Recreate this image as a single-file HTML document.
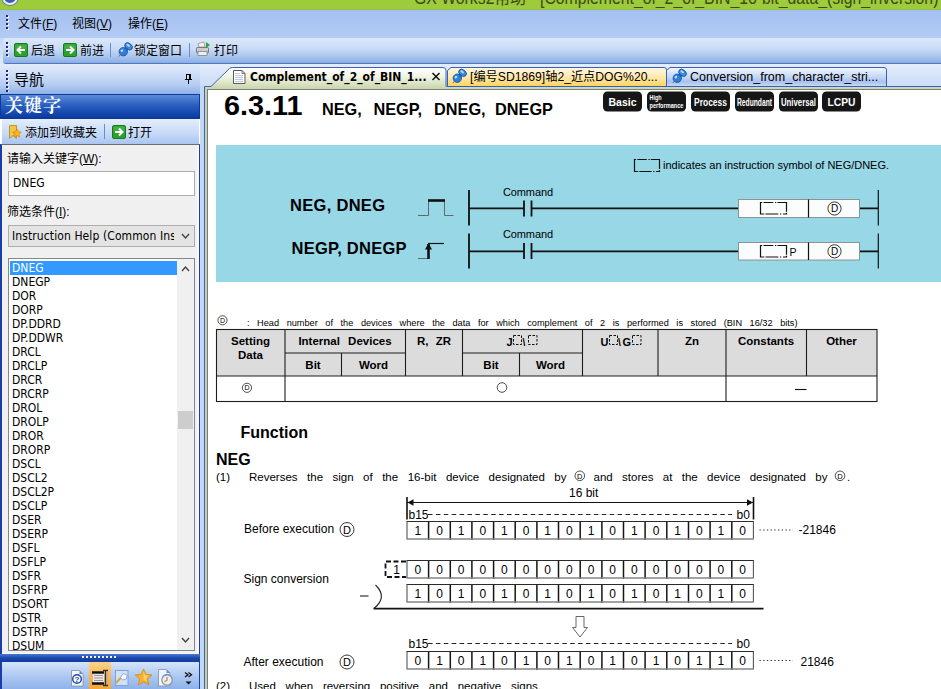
<!DOCTYPE html>
<html><head><meta charset="utf-8">
<style>
*{box-sizing:border-box;margin:0;padding:0}
html,body{width:941px;height:689px;overflow:hidden;background:#fff}
body{position:relative;font-family:"Liberation Sans","Noto Sans CJK SC",sans-serif;font-size:12px;color:#000}
.abs{position:absolute}
.ui{font-family:"Liberation Sans","Noto Sans CJK SC",sans-serif;font-size:12px;white-space:nowrap}
#title{left:0;top:0;width:941px;height:10px;background:#9ccb3b;overflow:hidden;border-bottom:1px solid #93bf46}
#menubar{left:0;top:10px;width:941px;height:28px;background:linear-gradient(#a3c0f0,#b4ccf4)}
#toolbar{left:0;top:38px;width:941px;height:26px;background:linear-gradient(#c4d8f6,#dbe7fa)}
#tbinner{left:3px;top:38px;width:941px;height:26px;border-radius:3px 0 0 3px;background:linear-gradient(#dde9fb 0%,#c6d9f6 45%,#8fb1e6 94%,#4f78c4 98%,#4f78c4 100%)}
.grip{width:3px;background:repeating-linear-gradient(#27257c 0 2px,transparent 2px 4px) 0 0/2px 100% no-repeat,repeating-linear-gradient(transparent 0 1px,#f2f6ff 1px 3px,transparent 3px 4px) 1px 0/2px 100% no-repeat}
#navhdr{left:0;top:64px;width:200px;height:30px;background:linear-gradient(#e1ebfb,#cbdcf7 40%,#b3cbf2 72%,#8fb1e7 100%)}
#kwhdr{left:0;top:94px;width:200px;height:25px;background:linear-gradient(#5a8ad8,#2a5fc0 45%,#0a3aa0);border:1px solid #0a3aa0}
#kwtb{left:2px;top:119px;width:197px;height:25px;background:linear-gradient(#e4eefc,#c5d8f7 60%,#a9c5f0)}
#lpbody{left:0;top:144px;width:200px;height:510px;background:#f0f0f0;border-left:2px solid #1a3ea8;border-right:1px solid #1a3ea8;border-top:1px solid #6e6e6e;box-shadow:inset -2px 0 0 #fafafa,inset 0 -1px 0 #fafafa}
#split{left:0;top:654px;width:200px;height:8px;background:linear-gradient(#4a78d0,#1c48ae 50%,#0f3aa0)}
#iconbar{left:0;top:662px;width:200px;height:27px;border-left:2px solid #1a3ea8;border-right:1px solid #1a3ea8;background:linear-gradient(#d5e4fa,#a8c5f0 60%,#8db2ea)}
#gap{left:200px;top:64px;width:741px;height:24px;background:linear-gradient(#e4edfc,#c9dbf6)}
#gapv{left:200px;top:86px;width:4px;height:603px;background:#c3d8f7}
#frame{left:204px;top:87px;width:737px;height:602px;border-left:1px solid #3b62b8;background:#c5d3a4}
#page{left:207px;top:89px;width:734px;height:600px;background:#fff;border-left:1px solid #7d7d7d;border-top:1px solid #7d7d7d}
.j{text-align:justify;text-align-last:justify;white-space:normal;overflow:hidden;height:14px}
.li{position:absolute;left:10px;height:14px;line-height:14px;font-size:12px;white-space:nowrap;font-family:"DejaVu Sans Condensed","DejaVu Sans","Liberation Sans",sans-serif}
.tah{font-family:"DejaVu Sans Condensed","DejaVu Sans","Liberation Sans","Noto Sans CJK SC",sans-serif}
</style></head><body>
<div id="title" class="abs"></div>
<div id="menubar" class="abs"></div>
<div id="toolbar" class="abs"></div>
<div id="tbinner" class="abs"></div>
<div id="navhdr" class="abs"></div>
<div id="kwhdr" class="abs"></div>
<div id="kwtb" class="abs"></div>
<div id="lpbody" class="abs"></div>
<div id="split" class="abs"></div>
<div id="iconbar" class="abs"></div>
<div id="gap" class="abs"></div>
<div id="gapv" class="abs"></div>
<div id="frame" class="abs"></div>
<div id="page" class="abs"></div>


<div class="abs" style="left:2px;top:-11px;width:16px;height:16px;border-radius:50%;background:#3d5fb0;border:2px solid #e8eef8;box-shadow:0 0 0 1px #6a7890"></div>
<div id="ttext" class="abs" style="left:414px;top:-12px;font-size:18px;line-height:20px;transform:scaleX(.877);transform-origin:0 0;color:#3c4a15;white-space:nowrap;overflow:hidden;height:20px">GX Works2帮助 - [Complement_of_2_of_BIN_16-bit_data_(sign_inversion)</div>
<div class="abs grip" style="left:6px;top:15px;height:16px"></div>
<div class="abs ui" id="m1" style="left:18px;top:16px;line-height:16px">文件(<u>F</u>)</div>
<div class="abs ui" id="m2" style="left:72px;top:16px;line-height:16px">视图(<u>V</u>)</div>
<div class="abs ui" id="m3" style="left:128px;top:16px;line-height:16px">操作(<u>E</u>)</div>
<div class="abs grip" style="left:6px;top:42px;height:16px"></div>
<svg class="abs" style="left:14px;top:43px" width="14" height="14"><rect x=".5" y=".5" width="13" height="13" rx="1.500" fill="#2da12d" stroke="#1a7a1a"/><path d="M1.500 1.500h11v5h-11z" fill="#4cb84c" opacity=".6"/><path d="M11 7H3.500M7 3.500L3.500 7L7 10.500" stroke="#fff" stroke-width="2" fill="none"/></svg>
<div class="abs ui" id="t1" style="margin-top:1px;left:31px;top:42px;line-height:16px">后退</div>
<svg class="abs" style="left:63px;top:43px" width="14" height="14"><rect x=".5" y=".5" width="13" height="13" rx="1.500" fill="#2da12d" stroke="#1a7a1a"/><path d="M1.500 1.500h11v5h-11z" fill="#4cb84c" opacity=".6"/><path d="M3 7H10.500M7 3.500L10.500 7L7 10.500" stroke="#fff" stroke-width="2" fill="none"/></svg>
<div class="abs ui" id="t2" style="margin-top:1px;left:80px;top:42px;line-height:16px">前进</div>
<div class="abs" style="left:110px;top:43px;width:1px;height:14px;background:#6a8ccc"></div>
<svg class="abs" style="left:118px;top:42px" width="16" height="16"><g><path d="M2.300 12.700L.8 14.600" stroke="#7a6a5a" stroke-width="1"/><circle cx="5.300" cy="9.700" r="4.200" fill="#2f80da" stroke="#1a4c9a" stroke-width=".8"/><path d="M6.300 6.200L9 3.800l2.600 2.800L8.800 9z" fill="#1f63bd"/><ellipse cx="10.600" cy="4.300" rx="4.300" ry="3" transform="rotate(40 10.600 4.300)" fill="#3a8ce2" stroke="#1a4c9a" stroke-width=".8"/><ellipse cx="10.200" cy="3.200" rx="2" ry="1" transform="rotate(40 10.200 3.200)" fill="#bfe0ff"/><ellipse cx="3.900" cy="8.600" rx="1.500" ry="1.100" transform="rotate(-40 3.900 8.600)" fill="#bfe0ff"/></g></svg>
<div class="abs ui" id="t3" style="margin-top:1px;left:134px;top:42px;line-height:16px">锁定窗口</div>
<div class="abs" style="left:189px;top:43px;width:1px;height:14px;background:#6a8ccc"></div>
<svg class="abs" style="left:195px;top:41px" width="17" height="17"><path d="M3 2.5L9 1L10 6H4z" fill="#f4f4f4" stroke="#888" stroke-width=".7"/><rect x="1.5" y="6.5" width="12" height="5.5" rx="1" fill="#c8ccd4" stroke="#666" stroke-width=".8"/><rect x="3" y="10.5" width="9" height="4" fill="#eee" stroke="#777" stroke-width=".7"/><path d="M11 1l4 3-4 3z" fill="#2fa32f"/></svg>
<div class="abs ui" id="t4" style="margin-top:1px;left:214px;top:42px;line-height:16px">打印</div>
<!--CHROME-->

<div class="abs grip" style="left:6px;top:70px;height:22px"></div>
<div class="abs ui" id="nav" style="left:14px;top:71px;font-size:15px;line-height:18px">导航</div>
<svg class="abs" style="left:184px;top:73px" width="10" height="12" shape-rendering="crispEdges"><rect x="2" y="1" width="5" height="1"/><rect x="2" y="1" width="1" height="6"/><rect x="5" y="1" width="2" height="6"/><rect x="1" y="6" width="7" height="1"/><rect x="4" y="7" width="1" height="4"/></svg>
<div class="abs" id="kw" style="left:5px;top:95px;font-family:'Liberation Serif','Noto Serif CJK SC',serif;font-weight:bold;font-size:18px;line-height:22px;color:#fff;letter-spacing:1px;white-space:nowrap">关键字</div>
<svg class="abs" style="left:8px;top:124px" width="14" height="16"><path d="M1.5 1.5h7v13l-3.5-3-3.5 3z" fill="#f3c64a" stroke="#b8860b" stroke-width=".8"/><path d="M9 5l1.3 2.8 3 .3-2.3 2 .7 3-2.7-1.6-2.7 1.6.7-3-2.3-2 3-.3z" fill="#ffb21e" stroke="#c77800" stroke-width=".6"/></svg>
<div class="abs ui" id="k1" style="left:25px;top:125px;line-height:16px">添加到收藏夹</div>
<div class="abs" style="left:104px;top:124px;width:1px;height:15px;background:#6a8ccc"></div>
<svg class="abs" style="left:112px;top:125px" width="14" height="14"><rect x=".5" y=".5" width="13" height="13" rx="1.500" fill="#2da12d" stroke="#1a7a1a"/><path d="M1.500 1.500h11v5h-11z" fill="#4cb84c" opacity=".6"/><path d="M3 7H10.500M7 3.500L10.500 7L7 10.500" stroke="#fff" stroke-width="2" fill="none"/></svg>
<div class="abs ui" id="k2" style="left:128px;top:125px;line-height:16px">打开</div>
<div class="abs ui" id="l1" style="left:7px;top:151px;line-height:16px">请输入关键字(<u>W</u>):</div>
<div class="abs" style="left:8px;top:171px;width:187px;height:25px;background:#fff;border:1px solid #abadb3"></div>
<div class="abs ui tah" id="inp" style="left:13px;top:176px;line-height:14px">DNEG</div>
<div class="abs ui" id="l2" style="left:7px;top:204px;line-height:16px">筛选条件(<u>I</u>):</div>
<div class="abs" style="left:8px;top:225px;width:187px;height:22px;background:#e4e4e4;border:1px solid #adadad"></div>
<div class="abs ui tah" id="sel" style="left:12px;top:229px;line-height:14px;width:162px;overflow:hidden;letter-spacing:.1px">Instruction Help (Common Instructions)</div>
<svg class="abs" style="left:181px;top:233px" width="9" height="7"><path d="M1 1l3.5 4L8 1" stroke="#444" stroke-width="1.4" fill="none"/></svg>
<div class="abs" id="lb" style="left:8px;top:258px;width:187px;height:393px;background:#fff;border:1px solid #828790;overflow:hidden">
<div class="li" style="top:2px;left:1px;width:167px;padding-left:2px;background:#3399ff;color:#fff">DNEG</div><div class="li" style="top:16px;left:3px">DNEGP</div><div class="li" style="top:30px;left:3px">DOR</div><div class="li" style="top:44px;left:3px">DORP</div><div class="li" style="top:58px;left:3px">DP.DDRD</div><div class="li" style="top:72px;left:3px">DP.DDWR</div><div class="li" style="top:86px;left:3px">DRCL</div><div class="li" style="top:100px;left:3px">DRCLP</div><div class="li" style="top:114px;left:3px">DRCR</div><div class="li" style="top:128px;left:3px">DRCRP</div><div class="li" style="top:142px;left:3px">DROL</div><div class="li" style="top:156px;left:3px">DROLP</div><div class="li" style="top:170px;left:3px">DROR</div><div class="li" style="top:184px;left:3px">DRORP</div><div class="li" style="top:198px;left:3px">DSCL</div><div class="li" style="top:212px;left:3px">DSCL2</div><div class="li" style="top:226px;left:3px">DSCL2P</div><div class="li" style="top:240px;left:3px">DSCLP</div><div class="li" style="top:254px;left:3px">DSER</div><div class="li" style="top:268px;left:3px">DSERP</div><div class="li" style="top:282px;left:3px">DSFL</div><div class="li" style="top:296px;left:3px">DSFLP</div><div class="li" style="top:310px;left:3px">DSFR</div><div class="li" style="top:324px;left:3px">DSFRP</div><div class="li" style="top:338px;left:3px">DSORT</div><div class="li" style="top:352px;left:3px">DSTR</div><div class="li" style="top:366px;left:3px">DSTRP</div><div class="li" style="top:380px;left:3px">DSUM</div>
<div class="abs" style="left:168px;top:0;width:17px;height:391px;background:#f0f0f0"></div>
<div class="abs" style="left:169px;top:152px;width:15px;height:18px;background:#cdcdcd"></div>
<svg class="abs" style="left:172px;top:6px" width="9" height="7"><path d="M1 6l3.5-4L8 6" stroke="#444" stroke-width="1.4" fill="none"/></svg>
<svg class="abs" style="left:172px;top:378px" width="9" height="7"><path d="M1 1l3.5 4L8 1" stroke="#444" stroke-width="1.4" fill="none"/></svg>
</div>
<div class="abs" style="left:82px;top:656px;width:36px;height:2px;background-image:repeating-linear-gradient(90deg,#eef3fd 0 2px,transparent 2px 4px)"></div>

<div class="abs" style="left:89px;top:662px;width:22px;height:27px;background:linear-gradient(#fdd28a,#f9b95a 45%,#f4a637)"></div>
<svg class="abs" style="left:60px;top:662px" width="140" height="27">
<g transform="translate(11,8)"><path d="M.5.500h8l3.500 3.500V16H.5z" fill="#f6f9fe" stroke="#8b95a8" stroke-width=".9"/><path d="M8.500.5l3.500 3.500H8.500z" fill="#5d8fd8"/><circle cx="6" cy="9" r="4.300" fill="#fff" stroke="#1b45a8" stroke-width="1.400"/><text x="6" y="12" font-size="8" font-weight="bold" fill="#1b45a8" text-anchor="middle" font-family="Liberation Sans, sans-serif">?</text></g>
<g transform="translate(32,8)"><rect x="1" y="3" width="11" height="10" fill="#e9e9e9"/><path d="M0 2.500H12M0 13.500H12" stroke="#111" stroke-width="2.400"/><path d="M2 5.500h9M2 8h9M2 10.500h9" stroke="#9a9a9a" stroke-width="1.200"/><path d="M11 .5h5M11 15.500h5M13.500 .5V15.500" stroke="#333" stroke-width="1.300"/><path d="M15.200 2V14" stroke="#9fb4d8" stroke-width="1"/></g>
<g transform="translate(55,8)"><rect x=".5" y=".5" width="12.500" height="15" fill="#cfe0fa" stroke="#7e9bd0" stroke-width=".9"/><path d="M1 13L6 7.500" stroke="#d9a23a" stroke-width="2"/><path d="M5.500 7.500l2.500-4 4 1.500-.5 4-4 1z" fill="#f4f8ff" stroke="#8aa0c8" stroke-width=".8"/></g>
<path d="M83.600 7l2.500 5.400 5.900.6-4.400 4 1.300 5.800-5.300-3-5.300 3 1.300-5.800-4.400-4 5.900-.6z" fill="#f6b02c" stroke="#d8860f" stroke-width=".8"/>
<path d="M83.600 9.500l1.600 3.700 3.600.4-2.700 2.500.8 3.600-3.300-1.900z" fill="#fbd26a"/>
<g transform="translate(98,7)"><path d="M.5.500h8l3.500 3.500V17H.5z" fill="#f2f5fb" stroke="#8b95a8" stroke-width=".9"/><path d="M8.500.5l3.500 3.500H8.500z" fill="#5d8fd8"/><circle cx="9" cy="11" r="5.200" fill="#e8eef8" stroke="#8c97ad" stroke-width="1.300"/><path d="M9 8v3.200l-2.500 1.500" stroke="#d88a1a" stroke-width="1.300" fill="none"/><path d="M5 7.500a5 5 0 0 1 7-1" stroke="#5d8fd8" stroke-width="1.200" fill="none"/></g>
<path d="M125 10.500l3 2.300-3 2.300M128.500 10.500l3 2.300-3 2.300" fill="none" stroke="#111" stroke-width="1.300"/>
<path d="M125.500 19.500h6l-3 3z" fill="#111"/>
</svg>
<!--LEFT-->

<svg class="abs" style="left:200px;top:64px" width="741" height="26">
<defs><linearGradient id="tg" x1="0" y1="0" x2="0" y2="1"><stop offset="0" stop-color="#ffffff"/><stop offset=".4" stop-color="#f1f4e6"/><stop offset="1" stop-color="#c5d3a4"/></linearGradient>
<linearGradient id="tg2" x1="0" y1="0" x2="0" y2="1"><stop offset="0" stop-color="#fff8e6"/><stop offset=".5" stop-color="#ffe9ae"/><stop offset="1" stop-color="#ffd15f"/></linearGradient>
<linearGradient id="tg3" x1="0" y1="0" x2="0" y2="1"><stop offset="0" stop-color="#f4f8fe"/><stop offset=".5" stop-color="#c4d7f6"/><stop offset=".75" stop-color="#a8c2ee"/><stop offset="1" stop-color="#c9dbf7"/></linearGradient></defs>
<path d="M247.500 22.500V6.500L251 3.500H464q2.500 0 2.500 2.500V22.500z" fill="url(#tg2)" stroke="#3560bd"/>
<path d="M466.500 22.500V6.500L470 3.500H684q2.500 0 2.500 2.500V22.500z" fill="url(#tg3)" stroke="#3560bd"/>
<path d="M4.500 26V22.500H11L29.500 4.500q1.500-1 3-1H243.500q3 0 3 3V22.500H741V26z" fill="url(#tg)" stroke="none"/>
<path d="M4.500 26V22.500H11L29.500 4.500q1.500-1 3-1H243q3 0 3 3V22.500" fill="none" stroke="#3b62b8"/>
<path d="M246.500 22.500H741" stroke="#3560bd"/>
<path d="M7 25.500H741" stroke="#7d7d7d"/>
<g transform="translate(33,6)"><path d="M.5.500h8.500l3 3V13.500H.5z" fill="#fff" stroke="#5a5a5a"/><path d="M9 .5v3h3" fill="none" stroke="#5a5a5a" stroke-width=".8"/><path d="M2 5.500h8M2 7.500h8M2 9.500h8M2 11.500h8M2 3.500h5" stroke="#a9b8d8" stroke-width=".8"/></g>
<g transform="translate(252,4.500)"><path d="M2.300 12.700L.8 14.600" stroke="#7a6a5a" stroke-width="1"/><circle cx="5.300" cy="9.700" r="4.200" fill="#2f80da" stroke="#1a4c9a" stroke-width=".8"/><path d="M6.300 6.200L9 3.800l2.600 2.800L8.800 9z" fill="#1f63bd"/><ellipse cx="10.600" cy="4.300" rx="4.300" ry="3" transform="rotate(40 10.600 4.300)" fill="#3a8ce2" stroke="#1a4c9a" stroke-width=".8"/><ellipse cx="10.200" cy="3.200" rx="2" ry="1" transform="rotate(40 10.200 3.200)" fill="#bfe0ff"/><ellipse cx="3.900" cy="8.600" rx="1.500" ry="1.100" transform="rotate(-40 3.900 8.600)" fill="#bfe0ff"/></g>
<g transform="translate(472,4.500)"><path d="M2.300 12.700L.8 14.600" stroke="#7a6a5a" stroke-width="1"/><circle cx="5.300" cy="9.700" r="4.200" fill="#2f80da" stroke="#1a4c9a" stroke-width=".8"/><path d="M6.300 6.200L9 3.800l2.600 2.800L8.800 9z" fill="#1f63bd"/><ellipse cx="10.600" cy="4.300" rx="4.300" ry="3" transform="rotate(40 10.600 4.300)" fill="#3a8ce2" stroke="#1a4c9a" stroke-width=".8"/><ellipse cx="10.200" cy="3.200" rx="2" ry="1" transform="rotate(40 10.200 3.200)" fill="#bfe0ff"/><ellipse cx="3.900" cy="8.600" rx="1.500" ry="1.100" transform="rotate(-40 3.900 8.600)" fill="#bfe0ff"/></g>
<path d="M232.500 9l7 7M239.500 9l-7 7" stroke="#111" stroke-width="1.500"/>
</svg>
<div class="abs ui" id="tab1" style="left:250px;top:69px;line-height:16px;font-weight:bold;font-size:12px;font-family:'DejaVu Sans Condensed','Liberation Sans',sans-serif">Complement_of_2_of_BIN_1...</div>
<div class="abs ui" id="tab2" style="left:470px;top:69px;line-height:16px;font-size:12.2px">[编号SD1869]轴2_近点DOG%20...</div>
<div class="abs ui" id="tab3" style="left:690px;top:69px;line-height:16px;font-size:12.5px">Conversion_from_character_stri...</div>
<!--TABS-->

<svg class="abs" style="left:0;top:0" width="941" height="689" font-family="Liberation Sans, sans-serif" fill="#000">
<text x="224" y="115" font-size="27.500" font-weight="bold" textLength="78.500" lengthAdjust="spacingAndGlyphs">6.3.11</text>
<g font-size="16.300" font-weight="bold"><text x="322" y="115">NEG,</text><text x="373.500" y="115">NEGP,</text><text x="434" y="115">DNEG,</text><text x="495" y="115">DNEGP</text></g>
<rect x="603" y="91.500" width="39" height="20" rx="4.500" fill="#161616"/><text x="622.5" y="106" font-size="11" font-weight="bold" fill="#fff" text-anchor="middle" textLength="28" lengthAdjust="spacingAndGlyphs">Basic</text><rect x="647" y="91.500" width="39" height="20" rx="4.500" fill="#161616"/><text x="649.5" y="100" font-size="7.500" font-weight="bold" fill="#fff" textLength="12" lengthAdjust="spacingAndGlyphs">High</text><text x="649.5" y="108" font-size="7.500" font-weight="bold" fill="#fff" textLength="34" lengthAdjust="spacingAndGlyphs">performance</text><rect x="691" y="91.500" width="39" height="20" rx="4.500" fill="#161616"/><text x="710.5" y="106" font-size="10.5" font-weight="bold" fill="#fff" text-anchor="middle" textLength="33" lengthAdjust="spacingAndGlyphs">Process</text><rect x="735" y="91.500" width="39" height="20" rx="4.500" fill="#161616"/><text x="754.5" y="106" font-size="10" font-weight="bold" fill="#fff" text-anchor="middle" textLength="35" lengthAdjust="spacingAndGlyphs">Redundant</text><rect x="779" y="91.500" width="39" height="20" rx="4.500" fill="#161616"/><text x="798.5" y="106" font-size="10" font-weight="bold" fill="#fff" text-anchor="middle" textLength="35" lengthAdjust="spacingAndGlyphs">Universal</text><rect x="822" y="91.500" width="39" height="20" rx="4.500" fill="#161616"/><text x="841.5" y="106" font-size="11.5" font-weight="bold" fill="#fff" text-anchor="middle" textLength="28" lengthAdjust="spacingAndGlyphs">LCPU</text>
<rect x="216" y="145" width="725" height="137" fill="#97d7e6"/>
<path d="M634.5 159.5H636.1M637.4 159.5H646.8M648.4 159.5H649.7M650.8 159.5H659.5M634.5 171.5H638.2M639.3 171.5H651.6M653.2 171.5H654.5M656.1 171.5H659.5M634.5 159.0V172.0M659.5 159.0V169.1M659.5 170.3V172.0" fill="none" stroke="#111" stroke-width="1.200"/>
<text x="663" y="168.500" font-size="11" textLength="226" lengthAdjust="spacing">indicates an instruction symbol of NEG/DNEG.</text>
<g font-size="16.500" font-weight="bold"><text x="290" y="211" textLength="95" lengthAdjust="spacing">NEG, DNEG</text><text x="291.500" y="253.500" textLength="115" lengthAdjust="spacing">NEGP, DNEGP</text></g>
<path d="M418 215.500H428.500V200.500M444.500 200.500V215.500H453.500" fill="none" stroke="#5d6b70" stroke-width="1"/>
<path d="M428 200.500H445" stroke="#111" stroke-width="2.600"/>
<path d="M418 258.500H428" stroke="#5d6b70" stroke-width="1"/>
<path d="M428.500 259V244" stroke="#111" stroke-width="2.600"/><path d="M428 243.500H444" stroke="#111" stroke-width="1.200"/>
<path d="M425 249.500L428.500 243L432 249.500z" fill="#111"/>
<g stroke="#111" stroke-width="1.800" fill="none">
<path d="M469 190V225.500M469 233.500V268.500"/>
<path d="M469 208.300H524M531.500 208.300H738M860 208.300H878"/>
<path d="M469 251.300H524M531.500 251.300H738M860 251.300H878"/>
<path d="M524 200.500V216.500M531.500 200.500V216.500M524 243V259M531.500 243V259"/>
</g>
<path d="M878.300 190V225.500M878.300 233.500V268.500" stroke="#111" stroke-width="1.200"/>
<text x="503" y="195.500" font-size="11" textLength="50" lengthAdjust="spacing">Command</text>
<text x="503" y="237.500" font-size="11" textLength="50" lengthAdjust="spacing">Command</text>
<rect x="738.500" y="199.500" width="121" height="18" fill="#fbfdfd" stroke="#8a9396"/>
<rect x="738.500" y="242.500" width="121" height="17.500" fill="#fbfdfd" stroke="#8a9396"/>
<path d="M808.500 199.500V217.500M808.500 242.500V260" stroke="#111" stroke-width="1.200"/>
<path d="M760.5 202.5H762.2M763.5 202.5H773.3M775.0 202.5H776.3M777.5 202.5H786.5M760.5 214.0H764.3M765.5 214.0H778.3M780.0 214.0H781.3M783.0 214.0H786.5M760.5 202.0V214.5M786.5 202.0V211.7M786.5 212.8V214.5" fill="none" stroke="#111" stroke-width="1.200"/>
<path d="M760.5 245.5H762.2M763.5 245.5H773.3M775.0 245.5H776.3M777.5 245.5H786.5M760.5 257.0H764.3M765.5 257.0H778.3M780.0 257.0H781.3M783.0 257.0H786.5M760.5 245.0V257.5M786.5 245.0V254.7M786.5 255.8V257.5" fill="none" stroke="#111" stroke-width="1.200"/>
<text x="789.500" y="256" font-size="10.500">P</text>
<circle cx="834.5" cy="208.5" r="6.6" fill="none" stroke="#222" stroke-width=".9"/><text x="834.5" y="212.1" font-size="10" text-anchor="middle">D</text>
<circle cx="834.5" cy="251.3" r="6.6" fill="none" stroke="#222" stroke-width=".9"/><text x="834.5" y="254.9" font-size="10" text-anchor="middle">D</text>

<circle cx="222.5" cy="320.3" r="4.6" fill="none" stroke="#222" stroke-width="0.8"/><text x="222.5" y="322.8" font-size="7" text-anchor="middle">D</text>
<g fill="#dcdcdc"><rect x="216.500" y="329.500" width="660.500" height="46.500"/></g>
<g stroke="#1e1e1e" stroke-width="1.100" fill="none">
<rect x="216.500" y="329.500" width="660.500" height="72"/>
<path d="M216.500 376H877M285 353H405.500M462.500 353H582.500"/>
<path d="M285 329.500V401.500M341.500 353V376M405.500 329.500V376M462.500 329.500V376M519.500 353V376M582.500 329.500V376M658 329.500V376M726 329.500V401.500M806.500 329.500V376"/>
</g>
<g font-size="11.500" font-weight="bold" text-anchor="middle">
<text x="250.500" y="345">Setting</text><text x="250.500" y="359">Data</text>
<text x="345" y="345" word-spacing="5">Internal Devices</text>
<text x="313" y="369">Bit</text><text x="373.500" y="369">Word</text>
<text x="434" y="345" word-spacing="4">R, ZR</text>
<text x="491" y="369">Bit</text><text x="550.500" y="369">Word</text>
<text x="692" y="345">Zn</text><text x="766" y="345">Constants</text><text x="841.500" y="345">Other</text>
</g>
<g font-size="11" font-weight="bold"><text x="506.500" y="345.500">J</text><text x="522.500" y="345.500" font-size="10">\</text><text x="600.500" y="345.500">U</text><text x="618" y="345.500" font-size="10">\</text><text x="622.500" y="345.500">G</text></g>
<g fill="none" stroke="#111" stroke-width="1" stroke-dasharray="2.500 1.500"><rect x="513.500" y="335.500" width="8" height="9"/><rect x="528.500" y="335.500" width="8.500" height="9"/><rect x="609.500" y="335.500" width="8" height="9"/><rect x="632.500" y="335.500" width="8.500" height="9"/></g>
<circle cx="247" cy="387.8" r="4.6" fill="none" stroke="#222" stroke-width="0.8"/><text x="247" y="390.3" font-size="7" text-anchor="middle">D</text>
<circle cx="502" cy="387.500" r="4.800" fill="none" stroke="#333" stroke-width=".9"/>
<path d="M795 389.500H806.500" stroke="#111" stroke-width="1.100"/>
<text x="240.500" y="437.500" font-size="16" font-weight="bold">Function</text>
<text x="216" y="465" font-size="16" font-weight="bold">NEG</text>
<circle cx="579.8" cy="475.8" r="4.8" fill="none" stroke="#222" stroke-width="0.8"/><text x="579.8" y="478.5" font-size="7.5" text-anchor="middle">D</text>
<circle cx="840" cy="475.8" r="4.8" fill="none" stroke="#222" stroke-width="0.8"/><text x="840" y="478.5" font-size="7.5" text-anchor="middle">D</text>
<text x="569" y="497" font-size="12">16 bit</text>
<path d="M407 502.500H753.500" stroke="#111" stroke-width="1.100"/>
<path d="M407 497V519.500M753.500 497V519.500" stroke="#111" stroke-width="1.600"/>
<path d="M407.500 502.500l6-3.200v6.400zM753 502.500l-6-3.200v6.400z" fill="#111"/>
<text x="408.500" y="518.500" font-size="12">b15</text><text x="736.500" y="518.500" font-size="12">b0</text>
<path d="M428 514.500H732" stroke="#222" stroke-width="1" stroke-dasharray="4.500 3.400"/>
<rect x="407.0" y="521.5" width="346.4" height="17.5" fill="#fff"/><path d="M428.6 521.5V540M450.3 521.5V540M471.9 521.5V540M493.6 521.5V540M515.2 521.5V540M536.9 521.5V540M558.5 521.5V540M580.2 521.5V540M601.9 521.5V540M623.5 521.5V540M645.1 521.5V540M666.8 521.5V540M688.5 521.5V540M710.1 521.5V540M731.8 521.5V540" stroke="#151515" stroke-width="1.500"/><path d="M406.5 521.5H753.9" stroke="#2a2a2a" stroke-width="1.200"/><path d="M407.0 521.5V539M753.4 521.5V539" stroke="#555" stroke-width="1.100"/><path d="M406.5 539H753.9" stroke="#858585" stroke-width="1.500"/><text x="417.8" y="534.7" font-size="12" text-anchor="middle">1</text><text x="439.5" y="534.7" font-size="12" text-anchor="middle">0</text><text x="461.1" y="534.7" font-size="12" text-anchor="middle">1</text><text x="482.8" y="534.7" font-size="12" text-anchor="middle">0</text><text x="504.4" y="534.7" font-size="12" text-anchor="middle">1</text><text x="526.1" y="534.7" font-size="12" text-anchor="middle">0</text><text x="547.7" y="534.7" font-size="12" text-anchor="middle">1</text><text x="569.4" y="534.7" font-size="12" text-anchor="middle">0</text><text x="591.0" y="534.7" font-size="12" text-anchor="middle">1</text><text x="612.7" y="534.7" font-size="12" text-anchor="middle">0</text><text x="634.3" y="534.7" font-size="12" text-anchor="middle">1</text><text x="656.0" y="534.7" font-size="12" text-anchor="middle">0</text><text x="677.6" y="534.7" font-size="12" text-anchor="middle">1</text><text x="699.3" y="534.7" font-size="12" text-anchor="middle">0</text><text x="720.9" y="534.7" font-size="12" text-anchor="middle">1</text><text x="742.6" y="534.7" font-size="12" text-anchor="middle">0</text>
<text x="244" y="533" font-size="12">Before execution</text>
<circle cx="347" cy="529.5" r="7" fill="none" stroke="#222" stroke-width="0.9"/><text x="347" y="533.5" font-size="11" text-anchor="middle">D</text>
<path d="M759.500 530H793" stroke="#2a2a2a" stroke-width="1.200" stroke-dasharray="1.300 2.400"/>
<text x="798.500" y="533.500" font-size="12">-21846</text>
<path d="M406 561.500H385.500V577H406" fill="none" stroke="#111" stroke-width="1.800" stroke-dasharray="5 2.500"/>
<text x="396.500" y="574" font-size="12" text-anchor="middle">1</text>
<rect x="407.0" y="560.5" width="346.4" height="17.5" fill="#fff"/><path d="M428.6 560.5V579M450.3 560.5V579M471.9 560.5V579M493.6 560.5V579M515.2 560.5V579M536.9 560.5V579M558.5 560.5V579M580.2 560.5V579M601.9 560.5V579M623.5 560.5V579M645.1 560.5V579M666.8 560.5V579M688.5 560.5V579M710.1 560.5V579M731.8 560.5V579" stroke="#151515" stroke-width="1.500"/><path d="M406.5 560.5H753.9" stroke="#2a2a2a" stroke-width="1.200"/><path d="M407.0 560.5V578M753.4 560.5V578" stroke="#555" stroke-width="1.100"/><path d="M406.5 578H753.9" stroke="#858585" stroke-width="1.500"/><text x="417.8" y="573.7" font-size="12" text-anchor="middle">0</text><text x="439.5" y="573.7" font-size="12" text-anchor="middle">0</text><text x="461.1" y="573.7" font-size="12" text-anchor="middle">0</text><text x="482.8" y="573.7" font-size="12" text-anchor="middle">0</text><text x="504.4" y="573.7" font-size="12" text-anchor="middle">0</text><text x="526.1" y="573.7" font-size="12" text-anchor="middle">0</text><text x="547.7" y="573.7" font-size="12" text-anchor="middle">0</text><text x="569.4" y="573.7" font-size="12" text-anchor="middle">0</text><text x="591.0" y="573.7" font-size="12" text-anchor="middle">0</text><text x="612.7" y="573.7" font-size="12" text-anchor="middle">0</text><text x="634.3" y="573.7" font-size="12" text-anchor="middle">0</text><text x="656.0" y="573.7" font-size="12" text-anchor="middle">0</text><text x="677.6" y="573.7" font-size="12" text-anchor="middle">0</text><text x="699.3" y="573.7" font-size="12" text-anchor="middle">0</text><text x="720.9" y="573.7" font-size="12" text-anchor="middle">0</text><text x="742.6" y="573.7" font-size="12" text-anchor="middle">0</text>
<rect x="407.0" y="584.5" width="346.4" height="17.5" fill="#fff"/><path d="M428.6 584.5V603M450.3 584.5V603M471.9 584.5V603M493.6 584.5V603M515.2 584.5V603M536.9 584.5V603M558.5 584.5V603M580.2 584.5V603M601.9 584.5V603M623.5 584.5V603M645.1 584.5V603M666.8 584.5V603M688.5 584.5V603M710.1 584.5V603M731.8 584.5V603" stroke="#151515" stroke-width="1.500"/><path d="M406.5 584.5H753.9" stroke="#2a2a2a" stroke-width="1.200"/><path d="M407.0 584.5V602M753.4 584.5V602" stroke="#555" stroke-width="1.100"/><path d="M406.5 602H753.9" stroke="#858585" stroke-width="1.500"/><text x="417.8" y="597.7" font-size="12" text-anchor="middle">1</text><text x="439.5" y="597.7" font-size="12" text-anchor="middle">0</text><text x="461.1" y="597.7" font-size="12" text-anchor="middle">1</text><text x="482.8" y="597.7" font-size="12" text-anchor="middle">0</text><text x="504.4" y="597.7" font-size="12" text-anchor="middle">1</text><text x="526.1" y="597.7" font-size="12" text-anchor="middle">0</text><text x="547.7" y="597.7" font-size="12" text-anchor="middle">1</text><text x="569.4" y="597.7" font-size="12" text-anchor="middle">0</text><text x="591.0" y="597.7" font-size="12" text-anchor="middle">1</text><text x="612.7" y="597.7" font-size="12" text-anchor="middle">0</text><text x="634.3" y="597.7" font-size="12" text-anchor="middle">1</text><text x="656.0" y="597.7" font-size="12" text-anchor="middle">0</text><text x="677.6" y="597.7" font-size="12" text-anchor="middle">1</text><text x="699.3" y="597.7" font-size="12" text-anchor="middle">0</text><text x="720.9" y="597.7" font-size="12" text-anchor="middle">1</text><text x="742.6" y="597.7" font-size="12" text-anchor="middle">0</text>
<text x="243.500" y="582.500" font-size="12">Sign conversion</text>
<path d="M360 596H368.500" stroke="#222" stroke-width="1.100"/>
<path d="M375.500 585Q388 597 374 608.500" fill="none" stroke="#222" stroke-width="1.100"/>
<path d="M373.500 608.700H763.500" stroke="#111" stroke-width="1.700"/>
<path d="M576 616.500H584V627.500H587.500L580 637L572.500 627.500H576z" fill="#fff" stroke="#555" stroke-width=".9"/>
<text x="408.500" y="647.500" font-size="12">b15</text><text x="736.500" y="647.500" font-size="12">b0</text>
<path d="M428 643.500H732" stroke="#222" stroke-width="1" stroke-dasharray="4.500 3.400"/>
<rect x="407.0" y="651.5" width="346.4" height="17.5" fill="#fff"/><path d="M428.6 651.5V670M450.3 651.5V670M471.9 651.5V670M493.6 651.5V670M515.2 651.5V670M536.9 651.5V670M558.5 651.5V670M580.2 651.5V670M601.9 651.5V670M623.5 651.5V670M645.1 651.5V670M666.8 651.5V670M688.5 651.5V670M710.1 651.5V670M731.8 651.5V670" stroke="#151515" stroke-width="1.500"/><path d="M406.5 651.5H753.9" stroke="#2a2a2a" stroke-width="1.200"/><path d="M407.0 651.5V669M753.4 651.5V669" stroke="#555" stroke-width="1.100"/><path d="M406.5 669H753.9" stroke="#858585" stroke-width="1.500"/><text x="417.8" y="664.7" font-size="12" text-anchor="middle">0</text><text x="439.5" y="664.7" font-size="12" text-anchor="middle">1</text><text x="461.1" y="664.7" font-size="12" text-anchor="middle">0</text><text x="482.8" y="664.7" font-size="12" text-anchor="middle">1</text><text x="504.4" y="664.7" font-size="12" text-anchor="middle">0</text><text x="526.1" y="664.7" font-size="12" text-anchor="middle">1</text><text x="547.7" y="664.7" font-size="12" text-anchor="middle">0</text><text x="569.4" y="664.7" font-size="12" text-anchor="middle">1</text><text x="591.0" y="664.7" font-size="12" text-anchor="middle">0</text><text x="612.7" y="664.7" font-size="12" text-anchor="middle">1</text><text x="634.3" y="664.7" font-size="12" text-anchor="middle">0</text><text x="656.0" y="664.7" font-size="12" text-anchor="middle">1</text><text x="677.6" y="664.7" font-size="12" text-anchor="middle">0</text><text x="699.3" y="664.7" font-size="12" text-anchor="middle">1</text><text x="720.9" y="664.7" font-size="12" text-anchor="middle">1</text><text x="742.6" y="664.7" font-size="12" text-anchor="middle">0</text>
<text x="243.500" y="665.500" font-size="12">After execution</text>
<circle cx="347" cy="662" r="7" fill="none" stroke="#222" stroke-width="0.9"/><text x="347" y="666.0" font-size="11" text-anchor="middle">D</text>
<path d="M759.500 660.500H793" stroke="#2a2a2a" stroke-width="1.200" stroke-dasharray="1.300 2.400"/>
<text x="800.500" y="665.500" font-size="12">21846</text>

</svg>

<div class="abs j" id="j0" style="left:247px;top:317px;width:550.500px;font-size:9.200px;line-height:12px">: Head number of the devices where the data for which complement of 2 is performed is stored (BIN 16/32 bits)</div>
<div class="abs" style="left:216px;top:470px;font-size:11.500px;line-height:14px">(1)</div>
<div class="abs j" id="j1" style="left:249px;top:470px;width:317.500px;font-size:11.500px;line-height:14px">Reverses the sign of the 16-bit device designated by</div>
<div class="abs j" id="j2" style="left:593.500px;top:470px;width:234px;font-size:11.500px;line-height:14px">and stores at the device designated by</div>
<div class="abs" style="left:847px;top:470px;font-size:11.500px;line-height:14px">.</div>
<div class="abs" style="left:216px;top:679px;font-size:11.500px;line-height:14px">(2)</div>
<div class="abs j" id="j3" style="left:249px;top:679px;width:292px;font-size:11.500px;line-height:14px">Used when reversing positive and negative signs.</div>
<!--DOC-->
</body></html>
